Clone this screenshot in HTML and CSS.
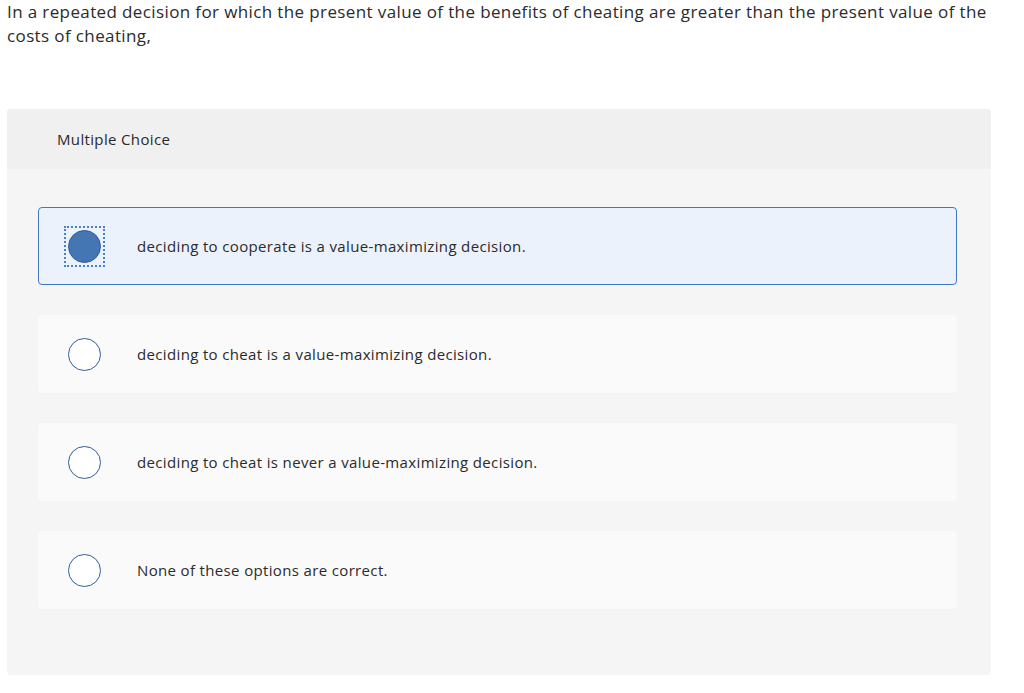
FILE: index.html
```html
<!DOCTYPE html>
<html>
<head>
<meta charset="utf-8">
<link rel="stylesheet" href="styles.css">
</head>
<body>
<div class="page">
  <p class="question">In a repeated decision for which the present value of the benefits of cheating are greater than the present value of the costs of cheating,</p>
  <div class="card">
    <div class="card-head">Multiple Choice</div>
    <div class="card-body">
      <div class="option selected">
        <span class="radio-focus"><span class="radio filled"></span></span>
        <span class="label">deciding to cooperate is a value-maximizing decision.</span>
      </div>
      <div class="option">
        <span class="radio-focus plain"><span class="radio"></span></span>
        <span class="label">deciding to cheat is a value-maximizing decision.</span>
      </div>
      <div class="option">
        <span class="radio-focus plain"><span class="radio"></span></span>
        <span class="label">deciding to cheat is never a value-maximizing decision.</span>
      </div>
      <div class="option">
        <span class="radio-focus plain"><span class="radio"></span></span>
        <span class="label">None of these options are correct.</span>
      </div>
    </div>
  </div>
</div>
</body>
</html>
```
FILE: styles.css
```css
html, body {
  margin: 0;
  padding: 0;
  background: #ffffff;
}
.page {
  padding: 0 33px 0 7px;
  font-family: "Open Sans", Lato, sans-serif;
  color: #333333;
}
.question {
  margin: 0;
  font-size: 17px;
  letter-spacing: 0.38px;
  line-height: 24px;
  color: #2b2b2b;
}
.card {
  margin-top: 61px;
  background: #f5f5f5;
  border-radius: 4px;
  overflow: hidden;
}
.card-head {
  background: #f0f0f0;
  height: 60px;
  padding-left: 50px;
  display: flex;
  align-items: center;
  font-size: 15px;
  letter-spacing: 0.35px;
  color: #2b2b2b;
}
.card-body {
  padding: 38px 34px 66px 31px;
  display: flex;
  flex-direction: column;
  gap: 30px;
}
.option {
  height: 78px;
  box-sizing: border-box;
  background: #fafafa;
  border-radius: 4px;
  display: flex;
  align-items: center;
  padding-left: 25px;
  border: 1px solid transparent;
}
.option.selected {
  background: #ebf2fb;
  border-color: #4278c0;
}
.radio-focus {
  width: 41px;
  height: 41px;
  box-sizing: border-box;
  border: 2px dotted #4a7fc9;
  display: flex;
  align-items: center;
  justify-content: center;
}
.radio-focus.plain {
  border-color: transparent;
}
.radio {
  width: 33px;
  height: 33px;
  box-sizing: border-box;
  border-radius: 50%;
  border: 1.5px solid #2f5d99;
  background: #ffffff;
}
.radio.filled {
  background: #4476b3;
}
.label {
  margin-left: 32px;
  font-size: 15px;
  letter-spacing: 0.35px;
  color: #2b2b2b;
}
```
